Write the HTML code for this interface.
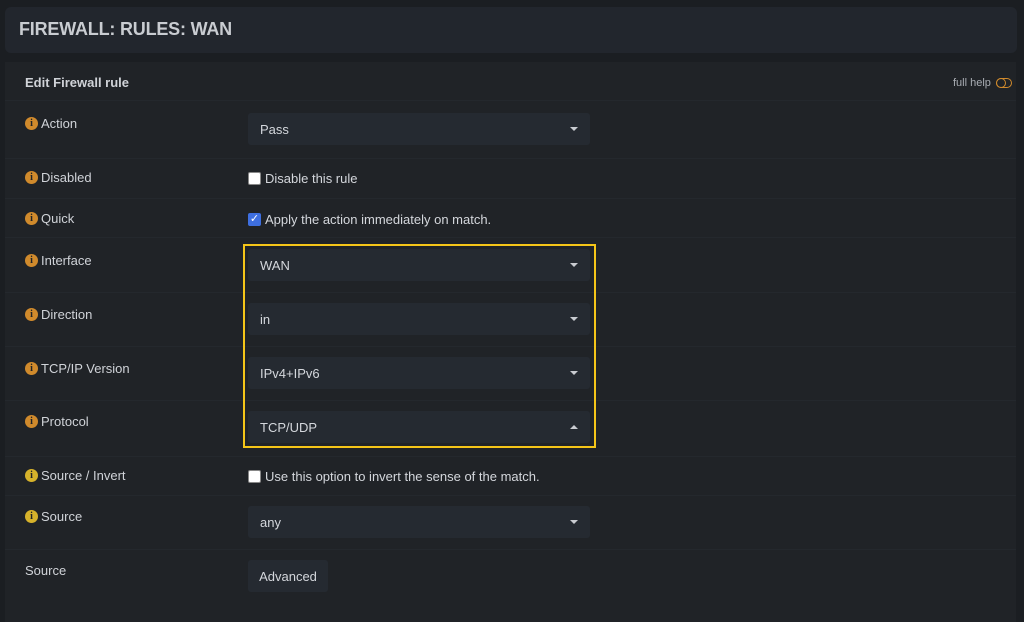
<!DOCTYPE html>
<html><head><style>
*{box-sizing:border-box;margin:0;padding:0}
body{width:1024px;height:610px;background:#1b1e22;font-family:"Liberation Sans",sans-serif;color:#d4d7dc;position:relative;overflow:hidden;font-size:13px}
.hdr{position:absolute;left:5px;top:7px;width:1012px;height:46px;background:#22262d;border-radius:6px}
.hdr h1{position:absolute;left:14px;top:12px;font-size:18px;font-weight:bold;color:#c9ccd1;letter-spacing:-0.2px}
.panel{position:absolute;left:5px;top:62px;width:1011px;height:560px;background:#202327}
.a{position:absolute}
.sep{position:absolute;left:5px;width:1011px;height:1px;background:#24282d}
.lbl{position:absolute;left:25px;display:flex;align-items:center;font-size:13px;color:#d0d3d8}
.i{width:13px;height:13px;border-radius:50%;background:#d08a2c;color:#202327;font-size:10px;font-weight:bold;font-family:"Liberation Serif",serif;display:inline-flex;align-items:center;justify-content:center;margin-right:3px}
.i.y{background:#d6b22b}
.sel{position:absolute;left:248px;width:342px;height:32px;background:#252a31;border-radius:3px;font-size:13px;padding-left:12px;line-height:33px;color:#d4d7dc}
.sel:after{content:"";position:absolute;right:12px;top:14px;border-left:4px solid transparent;border-right:4px solid transparent;border-top:4px solid #c9ccd1}
.sel.up:after{border-top:none;border-bottom:4px solid #c9ccd1}
.cb{position:absolute;left:248px;display:flex;align-items:center;font-size:13px}
.box{width:13px;height:13px;background:#fff;border:1px solid #888;border-radius:2px;margin-right:4px}
.box.on{background:#3e6fe0;border-color:#3e6fe0;color:#fff;font-size:11px;line-height:11px;text-align:center}
</style></head><body>
<div class="hdr"><h1>FIREWALL: RULES: WAN</h1></div>
<div class="panel"></div>
<div class="a" style="left:25px;top:75px;font-weight:bold;font-size:13px;color:#d0d3d8">Edit Firewall rule</div>
<div class="a" style="left:953px;top:77px;font-size:11px;color:#a9adb3">full help</div>
<div class="a" style="left:996px;top:78px;width:16px;height:10px;border:1.5px solid #d08a2c;border-radius:5px"></div>
<div class="a" style="left:996px;top:78px;width:10px;height:10px;border:1.5px solid #d08a2c;border-radius:50%"></div>
<div class="sep" style="top:100px"></div>
<div class="sep" style="top:158px"></div>
<div class="sep" style="top:198px"></div>
<div class="sep" style="top:237px"></div>
<div class="sep" style="top:292px"></div>
<div class="sep" style="top:346px"></div>
<div class="sep" style="top:400px"></div>
<div class="sep" style="top:456px"></div>
<div class="sep" style="top:495px"></div>
<div class="sep" style="top:549px"></div>

<div class="lbl" style="top:116px"><span class="i">i</span>Action</div>
<div class="sel" style="top:113px">Pass</div>
<div class="lbl" style="top:170px"><span class="i">i</span>Disabled</div>
<div class="cb" style="top:171px"><span class="box"></span>Disable this rule</div>
<div class="lbl" style="top:211px"><span class="i">i</span>Quick</div>
<div class="cb" style="top:212px"><span class="box on">✓</span>Apply the action immediately on match.</div>
<div class="lbl" style="top:253px"><span class="i">i</span>Interface</div>
<div class="sel" style="top:249px">WAN</div>
<div class="lbl" style="top:307px"><span class="i">i</span>Direction</div>
<div class="sel" style="top:303px">in</div>
<div class="lbl" style="top:361px"><span class="i">i</span>TCP/IP Version</div>
<div class="sel" style="top:357px">IPv4+IPv6</div>
<div class="lbl" style="top:414px"><span class="i">i</span>Protocol</div>
<div class="sel up" style="top:411px">TCP/UDP</div>
<div class="a" style="left:243px;top:244px;width:353px;height:204px;border:2px solid #f5c518"></div>
<div class="lbl" style="top:468px"><span class="i y">i</span>Source / Invert</div>
<div class="cb" style="top:469px"><span class="box"></span>Use this option to invert the sense of the match.</div>
<div class="lbl" style="top:509px"><span class="i y">i</span>Source</div>
<div class="sel" style="top:506px">any</div>
<div class="lbl" style="top:563px">Source</div>
<div class="a" style="left:248px;top:560px;width:80px;height:32px;background:#252a31;border-radius:3px;line-height:33px;text-align:center;font-size:13px">Advanced</div>
</body></html>
